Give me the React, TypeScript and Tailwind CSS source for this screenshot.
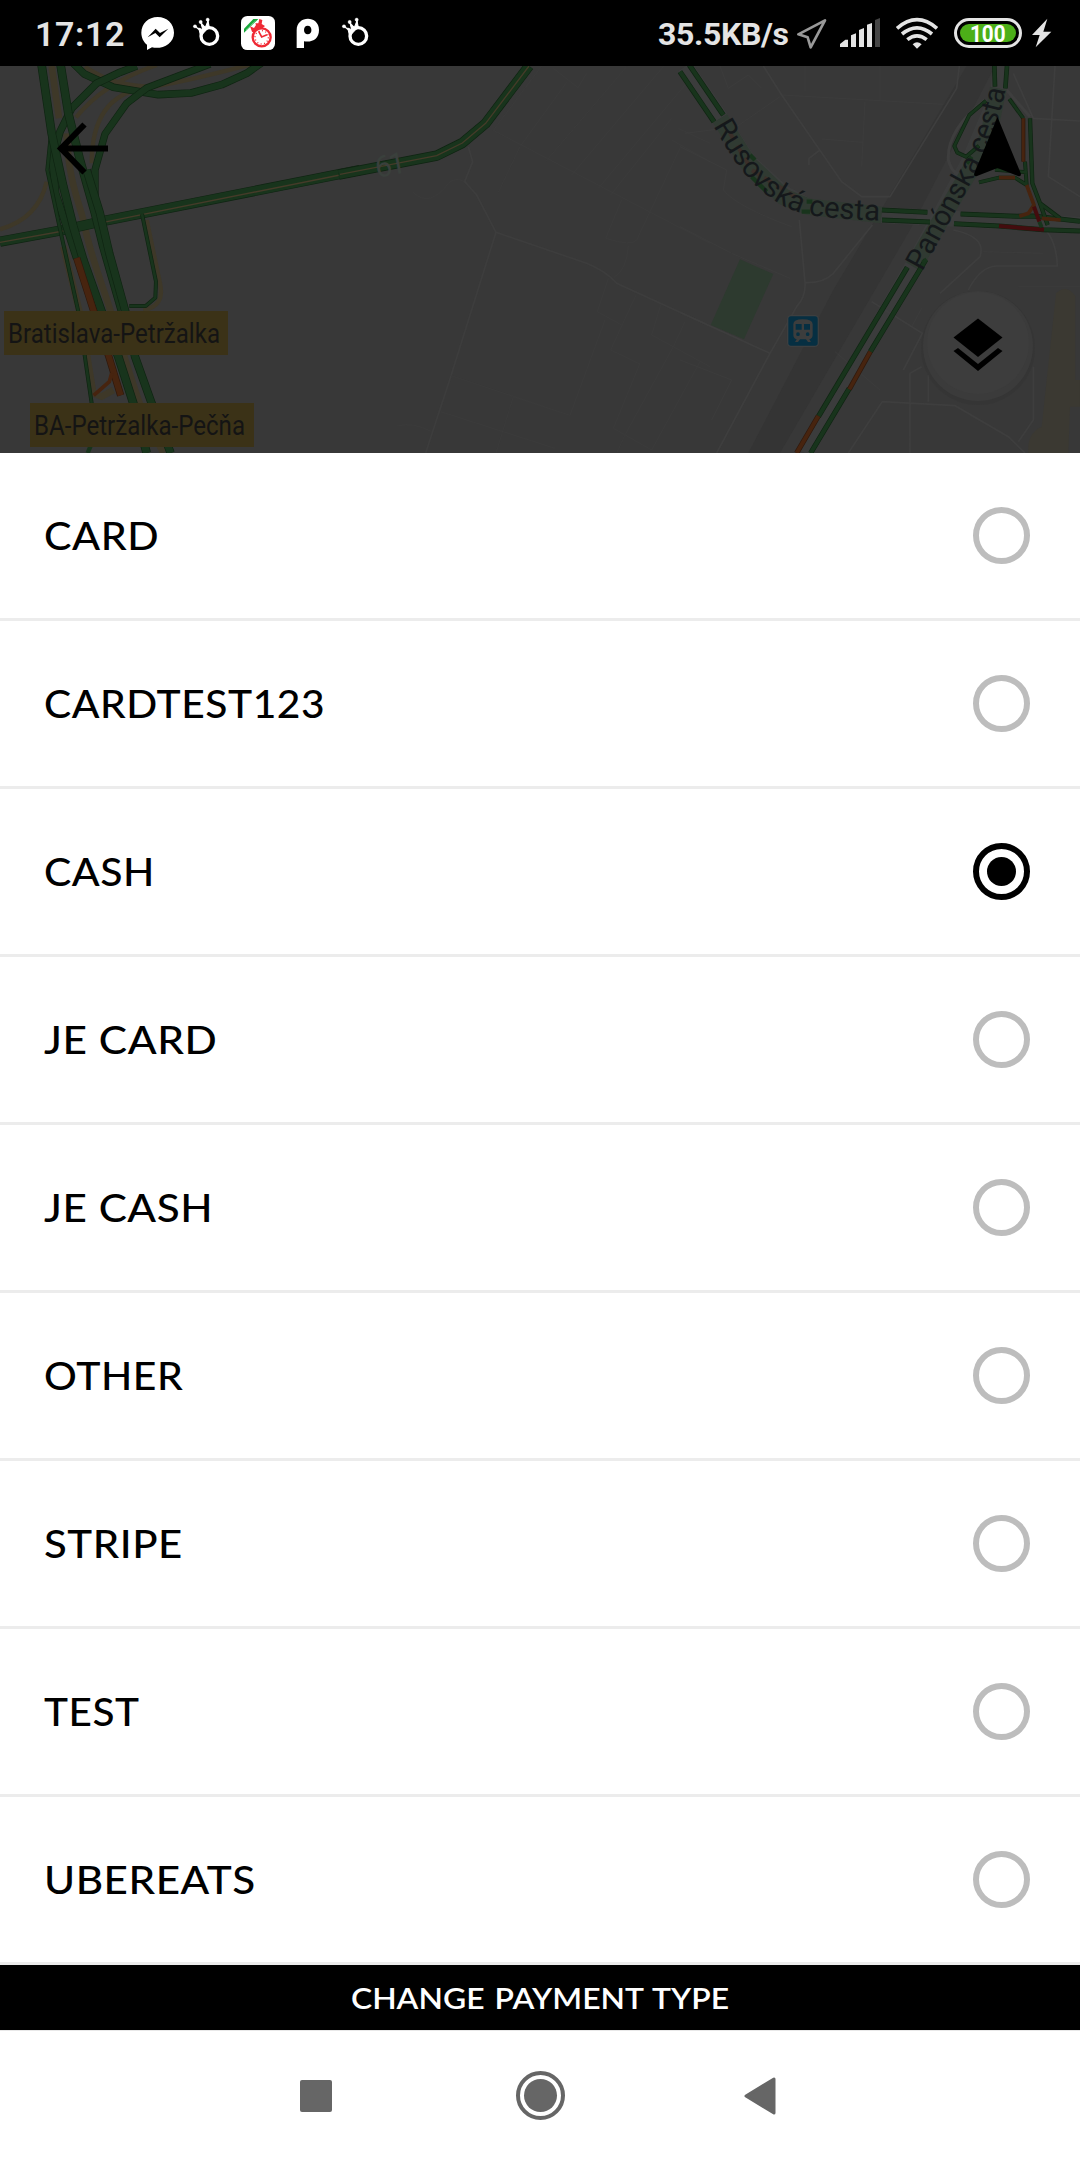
import React from "react";

const methods = [
  { label: "CARD", fit: "w-[115px]" },
  { label: "CARDTEST123", fit: "w-[281px]" },
  { label: "CASH", fit: "w-[111px]", selected: true },
  { label: "JE CARD", fit: "w-[173px]" },
  { label: "JE CASH", fit: "w-[169px]" },
  { label: "OTHER", fit: "w-[139px]" },
  { label: "STRIPE", fit: "w-[139px]" },
  { label: "TEST", fit: "w-[96px]" },
  { label: "UBEREATS", fit: "w-[212px]" },
];

function Icon({ x, w, className, children }: { x: number; w: number; className: string; children: React.ReactNode }) {
  return (
    <svg viewBox={`${x} 0 ${w} 198`} className={`h-[66px] shrink-0 ${className}`}>
      {children}
    </svg>
  );
}

function Crown() {
  return (
    <g fill="#fff" stroke="#fff">
      <circle cx="627" cy="108" r="25" fill="none" stroke="#fff" strokeWidth="10" />
      <path d="M601 108 L595 84 L607 89 L602 68 L615 82 L623 62 L627 82 L620 88 Z" strokeWidth="3" />
      <circle cx="584" cy="79" r="5" />
      <circle cx="601" cy="66" r="5" />
      <circle cx="622" cy="59" r="5" />
      <path d="M584 79 L603 94 M601 66 L610 88 M622 59 L623 84" strokeWidth="4" />
    </g>
  );
}

function StatusBar() {
  return (
    <header className="flex h-[66px] items-center justify-between bg-black text-[#e4e4e4]">
      <div className="flex items-center">
        <span className="ml-[35px] w-[106px] whitespace-nowrap text-[34px] font-semibold leading-none tracking-[0.6px] [font-family:Roboto,sans-serif]">
          <span className="relative top-px">17:12</span>
        </span>
        <Icon x={423} w={102} className="w-[34px]">
          <path d="M473 51 C445 51 424 71 424 98 C424 113 431 126 441 134 V150 L456 142 C485 149 522 132 522 98 C522 71 501 51 473 51Z" fill="#fff" />
          <path d="M443 112 L467 86 L480 99 L505 86 L479 112 L466 99Z" fill="#000" />
        </Icon>
        <Icon x={575} w={90} className="ml-[17px] w-[30px]"><Crown /></Icon>
        <Icon x={723} w={102} className="ml-[19px] w-[34px]">
          <rect x="723" y="48" width="102" height="102" rx="19" fill="#fff" />
          <path d="M732 98 V86 L760 57 H775Z" fill="#18a83b" />
          <path d="M739 89 L766 62" stroke="#85d496" strokeWidth="3" strokeDasharray="3 2" />
          <path d="M750 79 L762 84 L768 75 L766 70 L775 70 L778 57 L787 60 L785 72 L795 78 L768 101 L756 95Z" fill="#ef2934" />
          <circle cx="785" cy="112" r="27" fill="#fff" stroke="#ef2934" strokeWidth="7" />
          <circle cx="785" cy="112" r="20" fill="none" stroke="#ef2934" strokeWidth="4" strokeDasharray="3 7.500" />
          <path d="M776 94 L785 111 L801 104" fill="none" stroke="#ef2934" strokeWidth="5" />
        </Icon>
        <Icon x={888} w={72} className="ml-[21px] w-[24px]">
          <path fillRule="evenodd" fill="#fff" d="M890 144 V91 C890 45 957 45 957 90 C957 116 938 128 912 124 V144Z M923 77 C908 77 909 103 923 103 C938 103 938 77 923 77Z" />
        </Icon>
        <Icon x={575} w={90} className="ml-[21px] w-[30px]"><Crown /></Icon>
      </div>
      <div className="flex items-center">
        <span className="w-[138px] whitespace-nowrap text-[32px] font-bold leading-none tracking-[-0.35px] [font-family:Roboto,sans-serif]">
          <span className="relative top-px">35.5KB/s</span>
        </span>
        <Icon x={468} w={96} className="w-[32px]">
          <path d="M475 103 L555 61 L512 142 L503 112Z" fill="none" stroke="#999" strokeWidth="8" strokeLinejoin="round" />
        </Icon>
        <Icon x={597} w={126} className="ml-[11px] w-[42px]">
          <g fill="#e4e4e4">
            <path d="M600 141 V132 L616 119 H624 V141Z M633 106 L648 100 V141 H633Z M657 90 L672 84 V141 H657Z M681 74 L696 69 V141 H681Z" />
            <path d="M705 60 L720 54 V141 H705Z" fill="#444" />
          </g>
        </Icon>
        <Icon x={765} w={132} className="ml-[14px] w-[44px]">
          <g fill="none" stroke="#e4e4e4" strokeWidth="11">
            <path d="M771 85 Q831 33 891 85 M786 102 Q831 65 876 102 M802 119 Q831 96 860 119" />
            <path d="M818 133 Q831 121 845 133 L831 146Z" fill="#e4e4e4" stroke="none" />
          </g>
        </Icon>
        <div className="ml-[15px] flex h-[30px] w-[68px] rounded-full border-[3px] border-[#e4e4e4] p-[3px]">
          <div className="flex flex-1 items-center justify-center rounded-full bg-[#4caf18] text-[23px] font-bold leading-none text-white [font-family:Roboto,sans-serif]">
            <span className="relative top-px scale-x-90">100</span>
          </div>
        </div>
        <Icon x={1173} w={63} className="mr-[28px] ml-[9px] w-[21px]">
          <path d="M1222 56 L1176 105 H1199 L1187 142 L1234 95 H1210Z" fill="#e4e4e4" />
        </Icon>
      </div>
    </header>
  );
}

const G = "#18341c";
const E = "#0f2412";
const Y = "#3e3828";
const O = "#47240f";

function Road({ d, w = 20, c = G, e = E }: { d: string; w?: number; c?: string; e?: string }) {
  return (
    <g fill="none" strokeLinejoin="round">
      <path d={d} stroke={e} strokeWidth={w} />
      <path d={d} stroke={c} strokeWidth={w - 4} />
    </g>
  );
}

function TrafficMap() {
  return (
    <svg viewBox="0 66 1080 387" className="block h-[387px] w-[1080px] bg-[#383838]">
      {/* motorway interchange */}
      <g transform="translate(0 60) scale(.33333)">
        <g fill="none" stroke={Y} strokeWidth="13">
          <path d="M0 508 Q115 475 140 365 M228 172 Q310 70 470 15 M275 310 Q275 110 430 85 T800 0 M255 20 Q340 80 460 80 M440 480 L480 670 Q495 740 430 750" />
          <path d="M155 18 L177 175 M200 220 C205 360 235 420 250 480 C275 610 320 700 345 800 C370 880 400 980 430 1060 L490 1179 M190 560 L240 760 L280 1000 L305 1010 L340 990" strokeWidth="20" />
        </g>
        <Road d="M0 545 L190 510 L310 483 L1080 330" w={31} />
        <path d="M0 547 L190 513 M310 487 L1080 333" stroke="#453b29" strokeWidth="4" fill="none" />
        <Road d="M220 10 L253 42 L340 82 L475 104 L573 99 L665 74 L740 40 L785 8" w={23} />
        <Road d="M410 18 L360 37 L290 70 L215 145 L180 215 L157 300 L167 400 L230 595" w={23} />
        <Road d="M630 12 L440 84 L380 130 L315 222 L285 330 L285 415" w={22} />
        <Road d="M152 230 L142 330 L185 530 L235 755 L275 1030" w={12} />
        <Road d="M125 16 L155 220 L190 380 L220 500 L250 600 L305 755 L355 890 L400 1030 L440 1179" w={26} />
        <Road d="M182 16 L205 160 L240 300 L285 460 L310 560 L365 750" w={26} />
        <Road d="M260 330 L300 460 L328 580 L375 750 L405 890 L455 1030 L512 1179" w={25} />
        <Road d="M230 594 L280 750 L325 885 L362 1006" w={22} c={O} e="#2e180c" />
        <path d="M335 940 L328 965 L281 1006" fill="none" stroke={O} strokeWidth="11" />
        <Road d="M426 462 L468 665 L466 713 L437 738 L388 738" w={12} />
        <path d="M275 1150 L263 1179" stroke={G} strokeWidth="13" />
      </g>
      {/* minor streets and route 61 */}
      <g transform="translate(340 60) scale(.33333)">
        <g fill="none" stroke="#3d3d3d" strokeWidth="3">
          <path d="M385 260 L398 305 L374 365 L410 405 L468 517 L740 610 Q800 635 830 670 L1110 798 M468 517 L333 947 L257 1179" strokeWidth="5" />
          <path d="M219 397 Q270 445 325 370 Q345 350 374 365 M605 18 L460 211 L1110 550 M680 67 L540 260 L475 397 M860 20 L617 305 M970 20 L695 345 M1035 75 L775 385 M995 175 L812 405 M1020 265 L890 540 Q875 560 797 535 L845 420 M865 558 Q860 630 822 652 M1015 205 L1110 250 M995 240 L1110 305 M805 655 L772 755 L845 795 M888 705 L812 870 L900 912 M333 947 L690 1066 L795 780 M302 1055 L645 1165 M520 1010 L468 1179 M1000 860 L855 1125 L830 1179 M962 735 L935 825 L1110 920 M900 910 L820 1105 L935 1170 L1080 905 M1035 785 L1000 860 M640 25 L714 83 L740 40 M172 1098 Q220 1085 275 1115" opacity=".6" />
        </g>
        <Road d="M-4 344 L290 287 L367 249 L437 190 L567 18" w={31} />
        <path d="M0 343 L290 287 L367 249 L437 190 L567 18" fill="none" stroke="#453b29" strokeWidth="4" />
      </g>
      {/* railway, parks and eastern roads */}
      <g transform="translate(680 60) scale(.33333)">
        <path d="M860 18 H945 L690 510 L300 1179 H205 L460 690Z" fill="#343434" />
        <path d="M180 598 L280 642 L192 838 L92 795Z" fill="#2d3a2f" />
        <path d="M1128 700 Q1160 670 1186 708 V960 H1200 V1040 H1170 L1165 1179 H1045 Q1040 1120 1085 1100Z" fill="#3b3932" />
        <g fill="none" stroke="#3e3e3e" strokeWidth="5">
          <path d="M250 18 L305 105 L485 365 L545 410 H630 L830 85 L838 18 M577 495 L460 640 Q430 670 375 668 L358 480 M375 668 Q378 710 350 740 L270 880 L110 1179 M0 757 L270 880 M420 270 L387 295 V315 M1000 40 L1060 175 L1200 183 M1125 18 L1105 350 L1200 410 M820 510 Q920 530 900 590 L780 700 M865 690 Q900 620 950 618 H1132 Q1130 560 1108 525 L1090 500 M505 1179 L607 1025 L825 1037 L985 1130 L1035 1179 M745 945 V1025 M690 1179 V940 L725 920 M1060 920 V1080 L1015 1145 M575 725 L727 820 L670 930" />
          <path d="M305 105 L790 133 M555 125 L545 320 M425 237 L548 247 M600 18 V120 M375 18 V95 M120 18 L145 85 L205 45 L245 85 M0 260 L140 330 L130 390 Q170 440 335 500 M300 110 L170 200 L15 220 M0 500 L155 580 L330 655 M0 900 L155 960 L95 1080 M465 875 L600 990 M725 745 L695 800 M1015 680 H1200 M910 575 L1090 580" strokeWidth="3" opacity=".55" />
          <path d="M915 120 Q800 210 805 300 Q820 360 880 345 M980 90 L1050 170" strokeWidth="9" />
        </g>
        <g fill="none" stroke="#3d3f3e" strokeWidth="48">
          <path d="M15 20 L125 180 L205 305 L310 400 L385 440 L600 465 L1200 495" opacity=".7" />
          <path d="M962 18 L955 100 L865 310 L700 615 L375 1179" opacity=".7" />
        </g>
        <path d="M120 175 L205 310 L310 410 L385 440 L605 465 M955 85 L925 230 L865 340 L700 620" fill="none" stroke="#303a32" strokeWidth="50" />
        <Road d="M0 35 L102 185" w={16} />
        <Road d="M28 15 L130 165" w={16} />
        <Road d="M606 450 L742 457 M842 462 L1010 469 L1060 468 L1200 484" w={15} />
        <Road d="M606 480 L750 486 M822 491 L957 498 L1090 509 L1200 513" w={15} />
        <Road d="M943 18 L945 80 M981 18 L976 85" w={14} />
        <Road d="M918 122 L868 165 L823 258 L832 278 L858 290 L897 257" w={12} />
        <Road d="M988 117 L1030 175" w={12} />
        <Road d="M1050 175 L1057 370 L1080 430 L1103 495 M1080 430 L1140 475" w={13} />
        <Road d="M897 367 L957 353 L1005 353 L1040 375 L1035 305 M945 329 L1042 337" w={12} />
        <Road d="M1030 175 V305" w={12} c={O} e="#2e180c" />
        <path d="M957 353 H1005 M1040 375 L1062 435 L1045 460 L1018 469 M1085 475 L1142 480" fill="none" stroke={O} strokeWidth="11" />
        <path d="M1062 440 L1078 485 M957 498 L1092 509" fill="none" stroke="#430c0e" strokeWidth="12" />
        <path d="M1078 485 L1085 502" stroke={G} strokeWidth="12" />
        <Road d="M682 622 L415 1070" w={16} />
        <Road d="M415 1068 L350 1179" w={16} c={O} e="#2e180c" />
        <Road d="M737 600 L710 645 L571 875 M508 985 L392 1179" w={16} />
        <Road d="M571 875 L508 988" w={15} c={O} e="#2e180c" />
        <path d="M150 220 L215 330 L370 425" fill="none" stroke="#3b302a" strokeWidth="12" strokeDasharray="25 18" />
        <path d="M210 285 L225 300 M215 350 L260 395 M365 455 H390 M380 425 H397 M728 608 L740 598 M860 310 L875 290" fill="none" stroke={G} strokeWidth="13" />
        <path id="rusovska" d="M100 198 C165 310 205 375 300 432 C370 472 440 476 660 484" fill="none" />
        <path id="panonska" d="M727 635 L880 355 C930 260 965 170 980 65" fill="none" />
        <g fill="#15181b" fontFamily="Roboto, sans-serif" fontSize="88">
          <text><textPath href="#rusovska" textLength="618" lengthAdjust="spacingAndGlyphs">Rusovská cesta</textPath></text>
          <text><textPath href="#panonska" textLength="604" lengthAdjust="spacingAndGlyphs">Panónska cesta</textPath></text>
        </g>
        <rect x="321" y="765" width="96" height="96" rx="13" fill="#3d3f40" />
        <rect x="325" y="769" width="88" height="88" rx="8" fill="#062f42" />
        <path fillRule="evenodd" fill="#3c3d3d" d="M340 793 Q340 778 368 778 Q398 778 398 793 V825 Q398 835 388 838 L393 846 H384 L378 838 H360 L354 846 H345 L350 838 Q340 835 340 825Z M347 792 H365 V809 H347Z M372 792 H390 V809 H372Z M354 817 A5 5 0 1 0 354 828 A5 5 0 1 0 354 817 M383 817 A5 5 0 1 0 383 828 A5 5 0 1 0 383 817" />
      </g>
      <g fill="#3b3217">
        <rect x="4" y="311" width="224" height="44" />
        <rect x="30" y="403" width="224" height="44" />
      </g>
      <g fill="#141414" fontFamily="Roboto, sans-serif" fontSize="27">
        <text x="8" y="343" textLength="212" lengthAdjust="spacingAndGlyphs">Bratislava-Petržalka</text>
        <text x="34" y="435" textLength="211" lengthAdjust="spacingAndGlyphs">BA-Petržalka-Pečňa</text>
        <text x="377" y="178" transform="rotate(-11 377 178)" fontSize="30" textLength="31" fill="#3a403c">61</text>
      </g>
      {/* back arrow */}
      <path d="M108 148.500 H62 M84.500 124.500 L61 148.500 L84.500 172.500" fill="none" stroke="#000" strokeWidth="6" />
      {/* heading marker */}
      <path d="M997.500 117 L1021 174 Q1021 177 1018 176 L997.500 168 L977 176 Q974 177 974 174Z" fill="#000" />
      {/* layers button */}
      <circle cx="978" cy="348" r="57" fill="#2d2d2d" opacity=".18" />
      <circle cx="978" cy="346" r="55" fill="#3b3b3b" />
      <circle cx="978" cy="343" r="51" fill="#3d3d3d" />
      <path d="M978 318.500 L1002.500 337.500 L978 357 L953.500 337.500Z" fill="#000" />
      <path d="M953.500 351 L958 348 L978 364 L998 348 L1002.500 351 L978 371Z" fill="#000" />
    </svg>
  );
}

/* Stretches a caption horizontally so that it occupies exactly its box. */
function FitText({ children, className }: { children: string; className: string }) {
  const inner = React.useRef<HTMLSpanElement>(null);
  React.useLayoutEffect(() => {
    const fit = () => {
      const el = inner.current;
      if (el?.parentElement) {
        el.style.transform = `scaleX(${el.parentElement.clientWidth / el.offsetWidth})`;
      }
    };
    fit();
    document.fonts.ready.then(fit);
  }, []);
  return (
    <span className={`block whitespace-nowrap [font-family:Lato,sans-serif] ${className}`}>
      <span ref={inner} className="inline-block origin-left">{children}</span>
    </span>
  );
}

export default function App() {
  return (
    <main className="flex h-[2160px] w-[1080px] flex-col overflow-hidden bg-white">
      <StatusBar />
      <TrafficMap />
      <ul>
        {methods.map((m) => (
          <li key={m.label} className="flex h-[168px] items-center justify-between border-b-[3px] border-[#ececec] pr-[50px] pl-[44px]">
            <FitText className={`text-[38px] font-medium tracking-[0.5px] text-black ${m.fit}`}>{m.label}</FitText>
            <span className={`flex size-[57px] items-center justify-center rounded-full border-[6px] ${m.selected ? "border-black" : "border-[#bdbdbd]"}`}>
              {m.selected && <span className="size-[29px] rounded-full bg-black" />}
            </span>
          </li>
        ))}
      </ul>
      <div className="flex h-[66px] items-center justify-center border-b border-[#e8e8e8] bg-black text-white">
        <FitText className="w-[378px] pt-px text-[29.5px] font-semibold [word-spacing:2px]">CHANGE PAYMENT TYPE</FitText>
      </div>
      <nav className="flex flex-1 items-center pl-[300px]">
        <span className="size-8 rounded-[2px] bg-[#666]" />
        <span className="ml-[184px] flex size-[49px] items-center justify-center rounded-full border-4 border-[#666]">
          <span className="size-[33px] rounded-full bg-[#666]" />
        </span>
        <svg viewBox="0 0 32 38" className="ml-[179px] h-[38px] w-8">
          <path d="M2 19 L30 2 V36Z" fill="#666" stroke="#666" strokeWidth="3" strokeLinejoin="round" />
        </svg>
      </nav>
    </main>
  );
}
